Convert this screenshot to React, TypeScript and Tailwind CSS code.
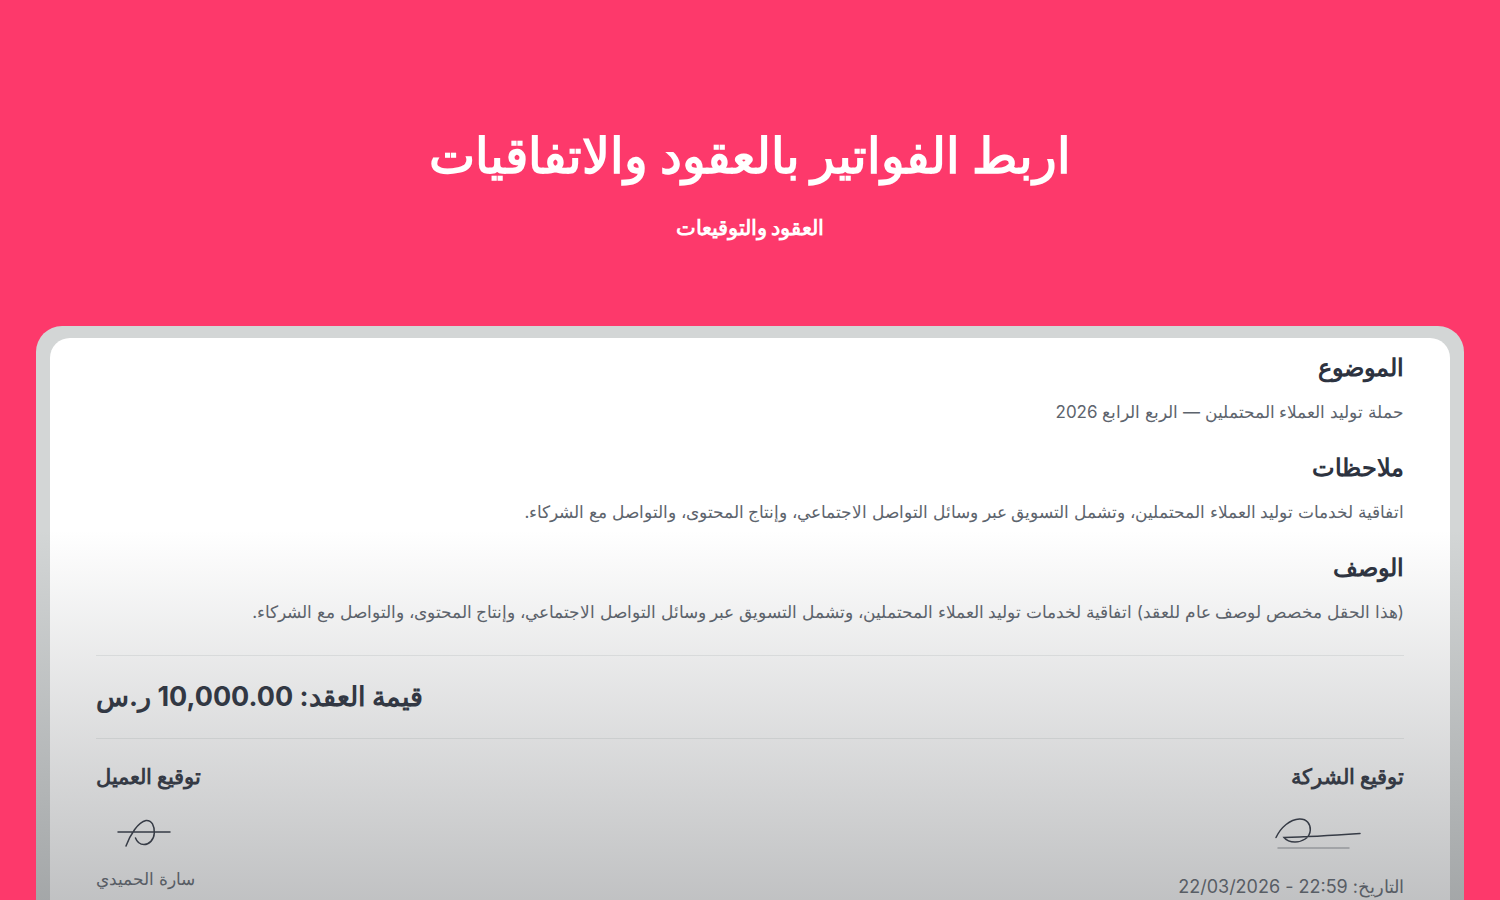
interface Section {
  title: string;
  text: string;
}

const SECTIONS: Section[] = [
  { title: 'الموضوع', text: 'حملة توليد العملاء المحتملين — الربع الرابع 2026' },
  {
    title: 'ملاحظات',
    text: 'اتفاقية لخدمات توليد العملاء المحتملين، وتشمل التسويق عبر وسائل التواصل الاجتماعي، وإنتاج المحتوى، والتواصل مع الشركاء.',
  },
  {
    title: 'الوصف',
    text: '(هذا الحقل مخصص لوصف عام للعقد) اتفاقية لخدمات توليد العملاء المحتملين، وتشمل التسويق عبر وسائل التواصل الاجتماعي، وإنتاج المحتوى، والتواصل مع الشركاء.',
  },
];

function CompanySignature() {
  return (
    <svg width="90" height="36" viewBox="0 0 90 36" fill="none" stroke="#2d3340" strokeWidth="1.5" strokeLinecap="round" aria-hidden="true">
      <path d="M2 22.5C7 12 16 4.500 25.500 4C33 3.800 36.500 9 36.300 15C36 23 28 27 21 27C16 27 12 25 10 22.500C30 22 50 21 86 18.500" />
      <path d="M4 33h71" stroke="#b4b7ba" />
    </svg>
  );
}

function ClientSignature() {
  return (
    <svg width="56" height="32" viewBox="0 0 56 32" fill="none" stroke="#2d3340" strokeWidth="1.5" strokeLinecap="round" aria-hidden="true">
      <path d="M2 13h52M10 27C14 16 22 3 30 1.500C36 1 38.500 7 38.300 14C38 21 33 25.500 28 25.500C24 25.500 21 23 19.500 19" />
    </svg>
  );
}

export default function App() {
  return (
    <div
      dir="rtl"
      lang="ar"
      className="min-h-screen flex flex-col bg-[#fd396b] px-9 font-['Inter','Noto_Sans',sans-serif]"
    >
      <header className="pt-31 pb-20 text-center text-white">
        <h1 className="text-[49px] leading-[64px] font-bold">اربط الفواتير بالعقود والاتفاقيات</h1>
        <p className="mt-[22px] text-[21px] leading-9 font-bold">العقود والتوقيعات</p>
      </header>

      <main className="relative flex-1 flex flex-col overflow-hidden rounded-t-[26px] bg-[#d3d6d6] px-3.5 pt-3">
        <div className="flex-1 rounded-t-[20px] bg-white px-[46px] pt-3">
          {SECTIONS.map((section) => (
            <section key={section.title} className="pb-[22px]">
              <h2 className="text-2xl leading-9 font-bold text-[#2d3340]">{section.title}</h2>
              <p className="mt-2.5 text-[17px] leading-8 text-[#5d646d]">{section.text}</p>
            </section>
          ))}

          <div className="mt-[5px] border-y border-[#ebeded] py-5 text-left">
            <p className="text-[27px] leading-[42px] font-bold text-[#2d3340]">قيمة العقد: 10,000.00 ر.س</p>
          </div>

          <div className="flex justify-between pt-5">
            <div>
              <h3 className="text-[21px] leading-9 font-bold text-[#2d3340]">توقيع الشركة</h3>
              <div className="mt-5 pr-10">
                <CompanySignature />
              </div>
              <p className="mt-6 text-lg leading-6 text-[#5d646d]">التاريخ: 22:59 - 22/03/2026</p>
            </div>
            <div className="flex flex-col items-end">
              <h3 className="text-[21px] leading-9 font-bold text-[#2d3340]">توقيع العميل</h3>
              <div className="mt-6 pl-5">
                <ClientSignature />
              </div>
              <p className="mt-3 text-[17px] leading-8 text-[#5d646d]">سارة الحميدي</p>
            </div>
          </div>
        </div>

        {/* fades the document out towards the bottom */}
        <div className="pointer-events-none absolute inset-x-0 bottom-0 h-[370px] bg-linear-to-b from-[#4d5054]/0 to-[#4d5054]/35" />
      </main>
    </div>
  );
}
